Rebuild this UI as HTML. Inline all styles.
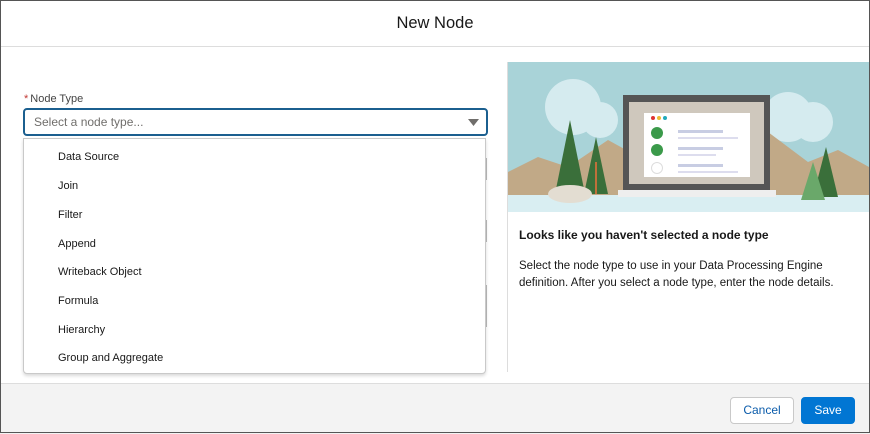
<html><head><style>
body{margin:0;width:870px;height:433px;overflow:hidden;font-family:"Liberation Sans",sans-serif;background:#fff;position:relative}
.bd{position:absolute;left:0;top:0;width:868px;height:431px;border:1px solid #555;z-index:5;pointer-events:none}
.hdr{position:absolute;left:0;top:0;width:870px;height:46px;border-bottom:1px solid #ddd;text-align:center;line-height:46px;font-size:16.5px;color:#181818}
.ftr{position:absolute;left:0;top:383px;width:870px;height:50px;background:#f3f3f3;border-top:1px solid #ddd}
.btn{position:absolute;top:13px;height:25px;border-radius:4px;font-size:12px;line-height:25px;text-align:center;box-sizing:border-box;height:27px}
.lbl{position:absolute;left:24px;top:93px;font-size:11px;color:#444}
.lbl b{color:#c23934;font-weight:normal;margin-right:2px}
.inp{position:absolute;left:23px;top:108px;width:465px;height:28px;border:2px solid #1b5f8f;border-radius:4px;box-sizing:border-box}
.inp span{position:absolute;left:9px;top:5px;font-size:12px;color:#706e6b}
.list{position:absolute;left:23px;top:138px;width:463px;height:236px;border:1px solid #c9c9c9;border-radius:0 0 4px 4px;background:#fff;box-shadow:0 2px 3px rgba(0,0,0,.15);box-sizing:border-box}
.list div{position:absolute;left:34px;font-size:11px;color:#181818}
.rp{position:absolute;left:507px;top:62px;width:363px;height:310px;border-left:1px solid #ddd}
</style></head><body><div class="bd"></div>
<div class="hdr">New Node</div>
<div style="position:absolute;left:486px;top:158px;width:1px;height:22px;background:#bbb"></div>
<div style="position:absolute;left:486px;top:220px;width:1px;height:22px;background:#bbb"></div>
<div style="position:absolute;left:486px;top:285px;width:1px;height:42px;background:#bbb"></div>
<div class="lbl"><b>*</b>Node Type</div>
<div class="inp"><span>Select a node type...</span>
<svg style="position:absolute;right:7px;top:9px" width="11" height="7"><path d="M0 0H11L5.5 7Z" fill="#706e6b"/></svg></div>
<div class="list">
<div style="top:12px">Data Source</div><div style="top:41px">Join</div><div style="top:70px">Filter</div><div style="top:99px">Append</div><div style="top:127px">Writeback Object</div><div style="top:156px">Formula</div><div style="top:185px">Hierarchy</div><div style="top:213px">Group and Aggregate</div>
</div>
<div class="rp">
<svg width="361" height="150" style="position:absolute;left:0;top:0">
<rect width="361" height="150" fill="#a9d3d8"/>
<circle cx="65" cy="45" r="28" fill="#d5ebef"/><circle cx="92" cy="58" r="18" fill="#d5ebef"/>
<circle cx="280" cy="55" r="25" fill="#d5ebef"/><circle cx="305" cy="60" r="20" fill="#d5ebef"/><circle cx="250" cy="60" r="18" fill="#d5ebef"/>
<path d="M0 110L30 95L60 105L100 78L140 100L200 80L260 70L300 100L330 88L361 105V135H0Z" fill="#c1a987"/>
<rect x="0" y="133" width="361" height="17" fill="#d9eef2"/>
<path d="M62 58L47 132H77Z" fill="#3a6f3a"/><path d="M88 75L76 132H100Z" fill="#3a6f3a"/><rect x="87" y="100" width="2" height="32" fill="#c0703a"/>
<path d="M318 85L305 135H330Z" fill="#3a6f3a"/><path d="M305 100L293 138H317Z" fill="#6aa86a"/>
<ellipse cx="62" cy="132" rx="22" ry="9" fill="#e3ddd2"/>
<rect x="115" y="33" width="147" height="95" fill="#555"/><rect x="121" y="40" width="135" height="82" fill="#cfc8bd"/>
<rect x="136" y="51" width="106" height="64" fill="#fff"/>
<circle cx="145" cy="56" r="2" fill="#d33"/><circle cx="151" cy="56" r="2" fill="#eb3"/><circle cx="157" cy="56" r="2" fill="#2ab"/>
<circle cx="149" cy="71" r="6" fill="#3b9a4a"/><circle cx="149" cy="88" r="6" fill="#3b9a4a"/><circle cx="149" cy="106" r="5.5" fill="none" stroke="#ddd"/>
<rect x="170" y="68" width="45" height="3" fill="#c8cde3"/><rect x="170" y="75" width="60" height="2" fill="#dde"/>
<rect x="170" y="85" width="45" height="3" fill="#c8cde3"/><rect x="170" y="92" width="38" height="2" fill="#dde"/>
<rect x="170" y="102" width="45" height="3" fill="#c8cde3"/><rect x="170" y="109" width="60" height="2" fill="#dde"/>
<rect x="110" y="128" width="158" height="7" fill="#eee"/>
</svg>
<div style="position:absolute;left:11px;top:166px;font-size:12px;font-weight:bold;color:#181818">Looks like you haven't selected a node type</div>
<div style="position:absolute;left:11px;top:196px;font-size:11.5px;line-height:17px;color:#181818;width:345px">Select the node type to use in your Data Processing Engine definition. After you select a node type, enter the node details.</div>
</div>
<div class="ftr">
<div class="btn" style="left:730px;width:64px;border:1px solid #c9c9c9;background:#fff;color:#0b5cab">Cancel</div>
<div class="btn" style="left:801px;width:54px;border:1px solid #0176d3;background:#0176d3;color:#fff">Save</div>
</div>
</body></html>
